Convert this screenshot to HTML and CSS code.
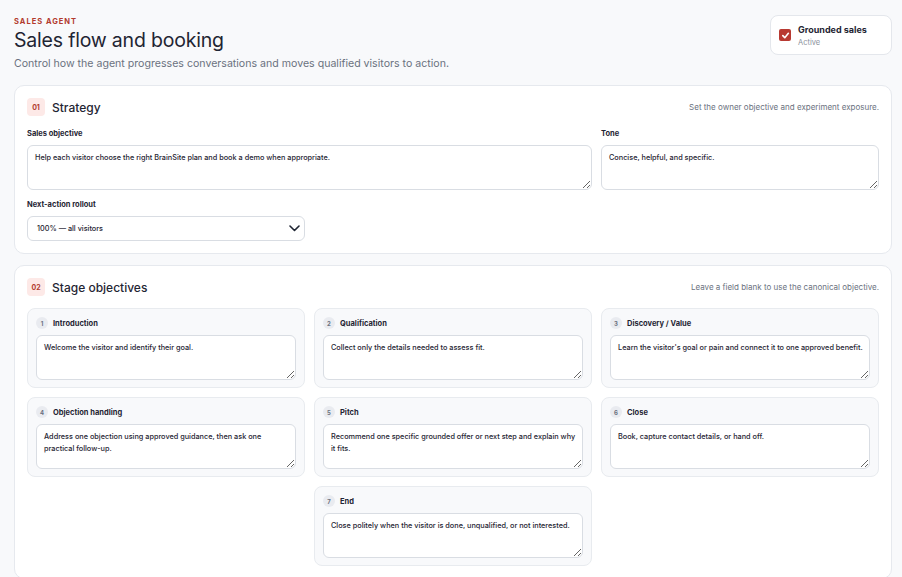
FILE: index.html
```html
<!DOCTYPE html>
<html>
<head>
  <title>Sales flow and booking</title>
  <link rel="stylesheet" href="styles.css">
</head>
<body>
  <div class="page">
    <div class="top">
      <div>
        <div class="eyebrow">SALES AGENT</div>
        <h1 class="title">Sales flow and booking</h1>
        <p class="subtitle">Control how the agent progresses conversations and moves qualified visitors to action.</p>
      </div>
      <label class="toggle">
        <span class="check">
          <svg width="9" height="9" viewBox="0 0 10 10"><path d="M2 5.2 L4.2 7.4 L8.2 2.6" fill="none" stroke="#fff" stroke-width="1.8" stroke-linecap="round" stroke-linejoin="round"/></svg>
        </span>
        <span>
          <span class="toggle-name">Grounded sales</span>
          <span class="toggle-state">Active</span>
        </span>
      </label>
    </div>

    <section class="card">
      <div class="card-head">
        <span class="badge">01</span>
        <h2 class="card-title">Strategy</h2>
        <span class="card-note">Set the owner objective and experiment exposure.</span>
      </div>
      <div class="form-grid">
        <div class="field wide">
          <label class="label">Sales objective</label>
          <textarea class="input">Help each visitor choose the right BrainSite plan and book a demo when appropriate.</textarea>
        </div>
        <div class="field">
          <label class="label">Tone</label>
          <textarea class="input">Concise, helpful, and specific.</textarea>
        </div>
        <div class="field">
          <label class="label">Next-action rollout</label>
          <div class="select">
            <span>100% — all visitors</span>
            <svg width="11" height="7" viewBox="0 0 11 7"><path d="M1 1 L5.5 5.5 L10 1" fill="none" stroke="#1f2533" stroke-width="1.6" stroke-linecap="round" stroke-linejoin="round"/></svg>
          </div>
        </div>
      </div>
    </section>

    <section class="card">
      <div class="card-head">
        <span class="badge">02</span>
        <h2 class="card-title">Stage objectives</h2>
        <span class="card-note">Leave a field blank to use the canonical objective.</span>
      </div>
      <div class="stages">
        <div class="stage">
          <div class="stage-head"><span class="num">1</span>Introduction</div>
          <textarea class="input">Welcome the visitor and identify their goal.</textarea>
        </div>
        <div class="stage">
          <div class="stage-head"><span class="num">2</span>Qualification</div>
          <textarea class="input">Collect only the details needed to assess fit.</textarea>
        </div>
        <div class="stage">
          <div class="stage-head"><span class="num">3</span>Discovery / Value</div>
          <textarea class="input">Learn the visitor's goal or pain and connect it to one approved benefit.</textarea>
        </div>
        <div class="stage">
          <div class="stage-head"><span class="num">4</span>Objection handling</div>
          <textarea class="input">Address one objection using approved guidance, then ask one practical follow-up.</textarea>
        </div>
        <div class="stage">
          <div class="stage-head"><span class="num">5</span>Pitch</div>
          <textarea class="input">Recommend one specific grounded offer or next step and explain why it fits.</textarea>
        </div>
        <div class="stage">
          <div class="stage-head"><span class="num">6</span>Close</div>
          <textarea class="input">Book, capture contact details, or hand off.</textarea>
        </div>
        <div class="stage last">
          <div class="stage-head"><span class="num">7</span>End</div>
          <textarea class="input">Close politely when the visitor is done, unqualified, or not interested.</textarea>
        </div>
      </div>
    </section>
  </div>
</body>
</html>
```

FILE: styles.css
```css
html, body {
  margin: 0;
  padding: 0;
  background-color: #f8f9fb;
  font-family: Inter, "Noto Sans", sans-serif;
  color: #1f2533;
}
.page {
  padding: 16px 10px 0 14px;
}
.top {
  display: flex;
  justify-content: space-between;
  align-items: flex-start;
  margin-bottom: 15px;
}
.eyebrow {
  color: #b23b2e;
  font-size: 7.5px;
  font-weight: 700;
  letter-spacing: 1px;
  margin-top: 1px;
}
.title {
  margin: 2px 0 0 0;
  font-size: 19.5px;
  font-weight: 400;
  letter-spacing: -0.2px;
}
.subtitle {
  margin: 5px 0 0 0;
  font-size: 10.6px;
  color: #6b7280;
}
.toggle {
  display: flex;
  align-items: center;
  gap: 7px;
  width: 104px;
  height: 38px;
  padding: 0 8px;
  margin-top: -1px;
  background: #fff;
  border: 1px solid #e4e7ec;
  border-radius: 8px;
}
.check {
  width: 12px;
  height: 12px;
  border-radius: 2px;
  background: #b83a32;
  display: flex;
  align-items: center;
  justify-content: center;
}
.toggle-name {
  display: block;
  font-size: 9px;
  font-weight: 700;
}
.toggle-state {
  display: block;
  font-size: 7.5px;
  color: #8b919c;
  margin-top: 3px;
}
.card {
  background: #fff;
  border: 1px solid #e6e9ee;
  border-radius: 10px;
  padding: 12px;
  margin-bottom: 11px;
}
.card-head {
  display: flex;
  align-items: center;
  gap: 7px;
  margin-bottom: 12px;
}
.badge {
  width: 18px;
  height: 18px;
  border-radius: 4px;
  background: #fde9e7;
  color: #b23b2e;
  font-size: 7px;
  font-weight: 700;
  display: flex;
  align-items: center;
  justify-content: center;
}
.card-title {
  margin: 0;
  font-size: 12px;
  font-weight: 500;
}
.card-note {
  margin-left: auto;
  font-size: 8px;
  color: #6b7280;
}
.form-grid {
  display: grid;
  grid-template-columns: 1fr 1fr 1fr;
  column-gap: 9px;
  row-gap: 9px;
}
.field.wide {
  grid-column: span 2;
}
.label {
  display: block;
  font-size: 7.5px;
  line-height: 12px;
  font-weight: 700;
  margin-bottom: 5px;
}
.input {
  display: block;
  box-sizing: border-box;
  width: 100%;
  height: 45px;
  padding: 6px 3px 6px 7px;
  border: 1px solid #d9dde3;
  border-radius: 6px;
  background: #fff;
  font-family: Inter, "Noto Sans", sans-serif;
  font-size: 7.3px;
  font-weight: 500;
  line-height: 1.6;
  color: #1f2533;
  resize: vertical;
  overflow: hidden;
}
.select {
  box-sizing: border-box;
  height: 25px;
  border: 1px solid #d9dde3;
  border-radius: 6px;
  display: flex;
  align-items: center;
  justify-content: space-between;
  padding: 0 4px 0 9px;
  font-size: 7.3px;
  font-weight: 500;
}
.stages {
  display: grid;
  grid-template-columns: 1fr 1fr 1fr;
  gap: 9px;
}
.stage {
  background: #f8f9fb;
  border: 1px solid #e8ebef;
  border-radius: 8px;
  padding: 8px 8px 7px 8px;
}
.stage.last {
  grid-column: 2;
}
.stage-head {
  display: flex;
  align-items: center;
  gap: 5px;
  font-size: 7.5px;
  font-weight: 700;
  margin-bottom: 6px;
}
.num {
  width: 12px;
  height: 12px;
  border-radius: 50%;
  background: #e9ebf0;
  color: #6b7280;
  font-size: 6px;
  display: flex;
  align-items: center;
  justify-content: center;
}
```
